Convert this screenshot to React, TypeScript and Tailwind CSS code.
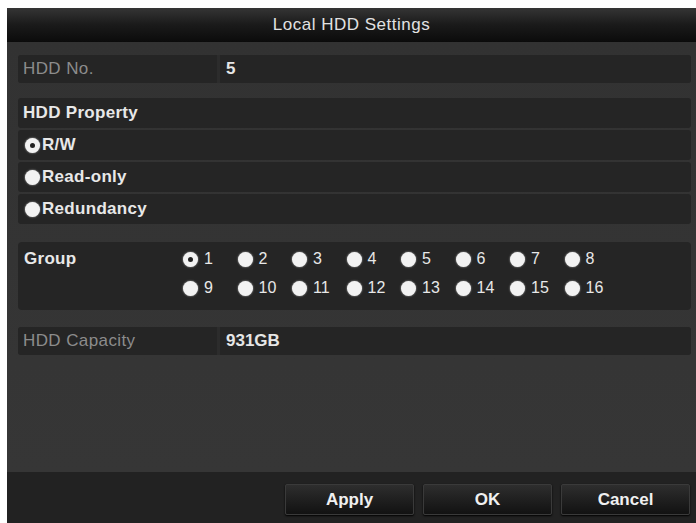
const groups = Array.from({ length: 16 }, (_, i) => i + 1);

function Radio({ checked }: { checked?: boolean }) {
  return (
    <span className="flex h-[15px] w-[15px] shrink-0 items-center justify-center rounded-full bg-[#f2f2f2] shadow-[0_0_2px_#bbb]">
      {checked && <span className="h-[5px] w-[5px] rounded-full bg-[#222]" />}
    </span>
  );
}

function FieldRow({ label, value }: { label: string; value: string }) {
  return (
    <div className="flex h-[28px] gap-[3px] rounded-[3px] bg-[#2c2c2c]">
      <div className="flex w-[199px] items-center rounded-l-[3px] bg-[#252525] pl-[5px] text-[17px] tracking-[0.4px] text-[#8c8c8c]">
        {label}
      </div>
      <div className="flex flex-1 items-center rounded-r-[3px] bg-[#252525] pl-[6px] text-[17px] font-bold text-[#e6e6e6]">
        {value}
      </div>
    </div>
  );
}

export default function App() {
  return (
    <div className="flex h-[523px] w-[696px] flex-col bg-white pl-[7px] pt-[8px] font-['Liberation_Sans',Arial,sans-serif]">
      <div className="flex flex-1 flex-col bg-[#333333]">
        <div className="flex h-[34px] items-center justify-center bg-gradient-to-b from-[#353535] via-[#1a1a1a] to-[#0b0b0b] text-[17px] tracking-[0.5px] text-[#e2e2e2]">
          Local HDD Settings
        </div>

        <div className="flex flex-1 flex-col bg-gradient-to-b from-[#323232] to-[#363636] pl-[11px] pr-[5px] pt-[13px]">
          <FieldRow label="HDD No." value="5" />

          <div className="mt-[15px] flex flex-col gap-[2px] text-[17px] font-bold tracking-[0.3px] text-[#e8e8e8]">
            <div className="flex h-[30px] items-center rounded-[3px] bg-[#252525] pl-[5px]">
              HDD Property
            </div>
            <div className="flex h-[30px] items-center gap-[2px] rounded-[3px] bg-[#252525] pl-[7px]">
              <Radio checked />
              <span>R/W</span>
            </div>
            <div className="flex h-[30px] items-center gap-[2px] rounded-[3px] bg-[#252525] pl-[7px]">
              <Radio />
              <span>Read-only</span>
            </div>
            <div className="flex h-[30px] items-center gap-[2px] rounded-[3px] bg-[#252525] pl-[7px]">
              <Radio />
              <span>Redundancy</span>
            </div>
          </div>

          <div className="mt-[18px] flex h-[68px] rounded-[4px] bg-[#252525] pl-[6px] pt-[9px] text-[#e8e8e8]">
            <div className="flex h-[16px] w-[159px] items-center text-[17px] font-bold tracking-[0.3px]">Group</div>
            <div className="grid grid-cols-[repeat(8,54.5px)] content-start gap-y-[13px] text-[16px]">
              {groups.map((n) => (
                <div key={n} className="flex h-[16px] items-center gap-[6px]">
                  <Radio checked={n === 1} />
                  <span>{n}</span>
                </div>
              ))}
            </div>
          </div>

          <div className="mt-[17px]">
            <FieldRow label="HDD Capacity" value="931GB" />
          </div>
        </div>

        <div className="flex h-[51px] justify-end gap-[9px] bg-[#222222] pr-[6px] pt-[12px]">
          {["Apply", "OK", "Cancel"].map((b) => (
            <button
              key={b}
              className="h-[31px] w-[129px] rounded-[2px] border border-[#3a3a3a] bg-gradient-to-b from-[#2e2e2e] to-[#121212] text-[17px] font-bold text-[#f0f0f0] shadow-[0_1px_2px_#000]"
            >
              {b}
            </button>
          ))}
        </div>
      </div>
    </div>
  );
}
